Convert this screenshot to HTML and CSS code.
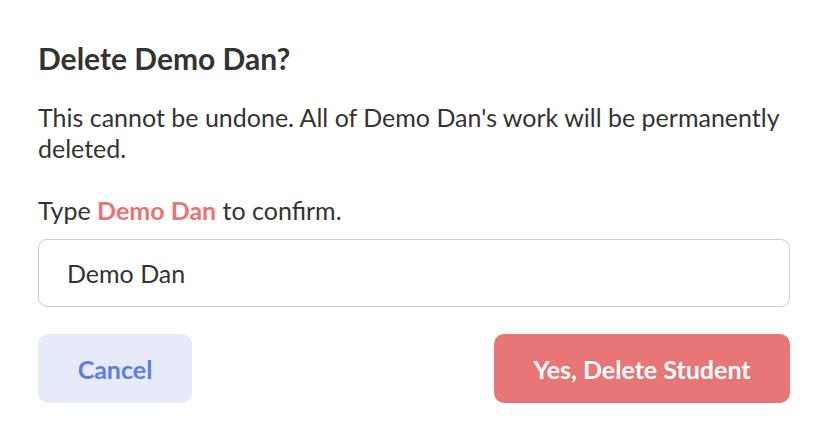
FILE: index.html
```html
<!DOCTYPE html>
<html>
<head>
<meta charset="utf-8">
<link rel="stylesheet" href="styles.css">
</head>
<body>
<div class="dialog">
  <h1 class="title">Delete Demo Dan?</h1>
  <p class="desc">This cannot be undone. All of Demo Dan's work will be permanently deleted.</p>
  <p class="prompt">Type <span class="name">Demo Dan</span> to confirm.</p>
  <div class="field">Demo Dan</div>
  <div class="actions">
    <button class="btn cancel">Cancel</button>
    <button class="btn delete">Yes, Delete Student</button>
  </div>
</div>
</body>
</html>
```
FILE: styles.css
```css
html, body {
  margin: 0;
  padding: 0;
  background: #ffffff;
}
body {
  width: 828px;
  height: 441px;
  overflow: hidden;
  font-family: "Lato", "Noto Sans", sans-serif;
  color: #333333;
}
.dialog {
  box-sizing: border-box;
  width: 828px;
  height: 441px;
  padding: 40px 38px 0 38px;
  display: flex;
  flex-direction: column;
}
.title {
  margin: 0;
  font-size: 30px;
  font-weight: 700;
  line-height: 36px;
  color: #333333;
}
.desc {
  margin: 26px 0 0 0;
  font-size: 25px;
  line-height: 31px;
  color: #333333;
}
.prompt {
  margin: 31px 0 0 0;
  font-size: 25px;
  line-height: 31px;
}
.name {
  color: #e87474;
  font-weight: 700;
}
.field {
  margin-top: 13px;
  box-sizing: border-box;
  height: 68px;
  border: 1px solid #cccccc;
  border-radius: 9px;
  padding: 0 0 0 28px;
  display: flex;
  align-items: center;
  font-size: 25px;
  color: #333333;
}
.actions {
  margin-top: 27px;
  display: flex;
  justify-content: space-between;
}
.btn {
  border: none;
  height: 69px;
  border-radius: 10px;
  font-family: inherit;
  font-size: 25px;
  font-weight: 700;
  padding: 0;
}
.cancel {
  width: 154px;
  background: #e6eafb;
  color: #5c7ce6;
}
.delete {
  width: 296px;
  background: #e87676;
  color: #ffffff;
}
```
